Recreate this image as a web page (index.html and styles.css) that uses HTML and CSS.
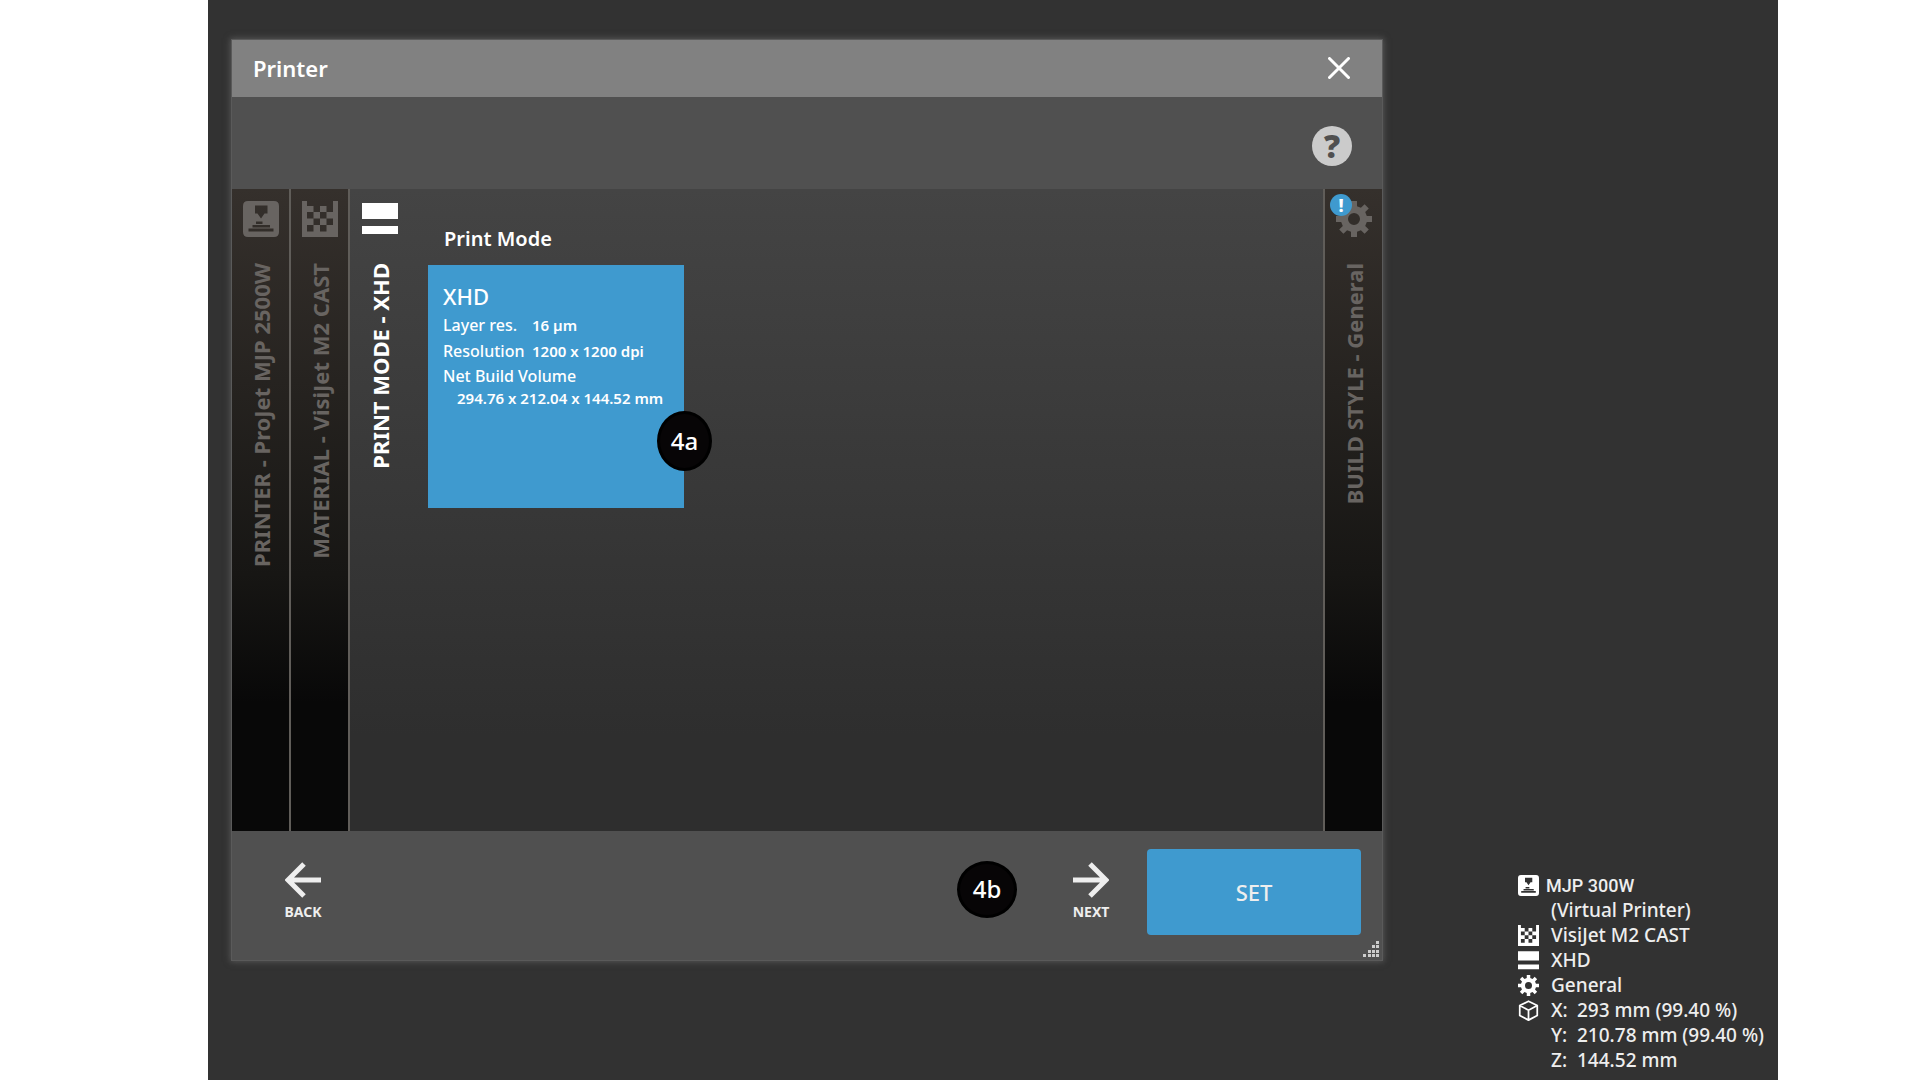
FILE: index.html
```html
<!DOCTYPE html>
<html lang="en">
<head>
<meta charset="utf-8">
<title>Printer</title>
<link rel="stylesheet" href="styles.css">
</head>
<body>
<svg class="sprite" aria-hidden="true">
  <symbol id="i-printer" viewBox="0 0 36 36">
    <path fill-rule="evenodd" d="M5 0H31Q36 0 36 5V31Q36 36 31 36H5Q0 36 0 31V5Q0 0 5 0ZM12 4.500V12.500H14.500L18 17.500L21.500 12.500H24.500V4.500ZM13 20.500V23H19.500V20.500ZM9.500 24V26.500H27V24ZM5.500 27.500V30.500H30.500V27.500Z"/>
  </symbol>
  <symbol id="i-material" viewBox="0 0 36 36">
    <path fill-rule="evenodd" d="M0 0H5V5H11.500V11H18V5H24.500V11H31V0H36V36H0ZM5 11V17.500H11.500V11ZM18 11V17.500H24.500V11ZM11.500 17.500V24H18V17.500ZM24.500 17.500V24H31V17.500ZM5 24V30.500H11.500V24ZM18 24V30.500H24.500V24Z"/>
  </symbol>
  <symbol id="i-mode" viewBox="0 0 36 36">
    <path d="M0 2H36V18H0ZM0 25H36V33H0Z"/>
  </symbol>
  <symbol id="i-gear" viewBox="0 0 36 36">
    <path fill-rule="evenodd" d="M15 0H21V5.200L24.900 6.800L28.600 3.200L32.800 7.400L29.200 11.100L30.800 15H36V21H30.800L29.200 24.900L32.800 28.600L28.600 32.800L24.900 29.200L21 30.800V36H15V30.800L11.100 29.200L7.400 32.800L3.200 28.600L6.800 24.900L5.200 21H0V15H5.200L6.800 11.100L3.200 7.400L7.400 3.200L11.100 6.800L15 5.200ZM18 12A6 6 0 1 0 18 24A6 6 0 1 0 18 12Z"/>
  </symbol>
  <symbol id="i-box" viewBox="0 0 36 36">
    <path fill="none" stroke="currentColor" stroke-width="3" stroke-linejoin="round" d="M18 2L33 9.500V26.500L18 34.500L3 26.500V9.500ZM3 9.500L18 17.500L33 9.500M18 17.500V34.500"/>
  </symbol>
</svg>
<main class="stage">
  <section class="dialog" role="dialog" aria-labelledby="dialog-title">
    <header class="titlebar">
      <h1 id="dialog-title">Printer</h1>
      <button class="close" aria-label="Close">
        <svg viewBox="0 0 22 22"><path d="M1.500 1.500L20.500 20.500M20.500 1.500L1.500 20.500"/></svg>
      </button>
    </header>
    <div class="toolbar">
      <button class="help" aria-label="Help">?</button>
    </div>
    <div class="panels">
      <button class="tab">
        <svg class="tab-icon"><use href="#i-printer"/></svg>
        <span class="tab-label">PRINTER - ProJet MJP 2500W</span>
      </button>
      <button class="tab">
        <svg class="tab-icon"><use href="#i-material"/></svg>
        <span class="tab-label">MATERIAL - VisiJet M2 CAST</span>
      </button>
      <div class="panel">
        <button class="tab active" aria-current="step">
          <svg class="tab-icon"><use href="#i-mode"/></svg>
          <span class="tab-label">PRINT MODE - XHD</span>
        </button>
        <div class="content">
          <h2>Print Mode</h2>
          <div class="card-wrap">
            <button class="card" aria-pressed="true">
              <span class="card-title">XHD</span>
              <span class="card-row"><span class="card-key">Layer res.</span><span class="card-value">16 µm</span></span>
              <span class="card-row"><span class="card-key">Resolution</span><span class="card-value">1200 x 1200 dpi</span></span>
              <span class="card-row volume">Net Build Volume</span>
              <span class="card-value volume-size">294.76 x 212.04 x 144.52 mm</span>
            </button>
            <span class="callout on-card">4a</span>
          </div>
        </div>
      </div>
      <button class="tab last">
        <svg class="tab-icon"><use href="#i-gear"/></svg>
        <span class="alert">!</span>
        <span class="tab-label">BUILD STYLE - General</span>
      </button>
    </div>
    <footer class="footer">
      <button class="nav">
        <svg viewBox="0 0 36 36"><path d="M36 18H4M19 2L3 18L19 34"/></svg>
        BACK
      </button>
      <span class="callout in-footer">4b</span>
      <button class="nav">
        <svg viewBox="0 0 36 36"><path d="M0 18H32M17 2L33 18L17 34"/></svg>
        NEXT
      </button>
      <button class="set">SET</button>
      <svg class="grip" viewBox="0 0 17 17"><path d="M13 0h3v3h-3zM9 4h3v3h-3zM13 4h3v3h-3zM5 9h3v3h-3zM9 9h3v3h-3zM13 9h3v3h-3zM0 13h3v3h-3zM5 13h3v3h-3zM9 13h3v3h-3zM13 13h3v3h-3z"/></svg>
    </footer>
  </section>
  <aside class="status">
    <div class="line printer"><svg><use href="#i-printer"/></svg><span class="printer-name">MJP 300W</span></div>
    <div class="line"><span></span><span>(Virtual Printer)</span></div>
    <div class="line"><svg><use href="#i-material"/></svg><span>VisiJet M2 CAST</span></div>
    <div class="line"><svg><use href="#i-mode"/></svg><span>XHD</span></div>
    <div class="line"><svg><use href="#i-gear"/></svg><span>General</span></div>
    <div class="line"><svg><use href="#i-box"/></svg><span class="axis">X:</span><span>293 mm (99.40 %)</span></div>
    <div class="line"><span></span><span class="axis">Y:</span><span>210.78 mm (99.40 %)</span></div>
    <div class="line"><span></span><span class="axis">Z:</span><span>144.52 mm</span></div>
  </aside>
</main>
</body>
</html>
```
FILE: styles.css
```css
* { box-sizing: border-box; }

body {
  margin: 0;
  padding: 0 142px 0 208px;
  background: #fff;
  color: #fff;
  font-family: "Noto Sans", "Open Sans", sans-serif;
  font-weight: 500;
}

h1, h2 { margin: 0; font-size: 20px; line-height: 28px; }

button {
  margin: 0;
  padding: 0;
  border: 0;
  background: none;
  color: inherit;
  font: inherit;
  cursor: pointer;
}

svg { display: block; fill: currentColor; }

.sprite { position: absolute; width: 0; height: 0; }

.stage {
  display: grid;
  grid-template-columns: minmax(0, 1fr) 396px;
  min-height: 100vh;
  padding: 40px 0 7px 24px;
  background: #323232;
}

/* Dialog */
.dialog {
  align-self: start;
  background: #505050;
  box-shadow: 0 0 0 1px #5a5a5a, 0 0 6px 2px #555;
}

.titlebar {
  display: flex;
  align-items: center;
  justify-content: space-between;
  height: 57px;
  padding: 0 32px 2px 21px;
  background: #818181;
}

.titlebar h1 { font-size: 22px; font-weight: 600; }

.close svg {
  width: 22px;
  height: 22px;
  stroke: #fff;
  stroke-width: 3;
  stroke-linecap: round;
}

.toolbar {
  display: flex;
  align-items: center;
  justify-content: flex-end;
  height: 92px;
  padding: 6px 30px 0 0;
}

.help {
  width: 40px;
  height: 40px;
  border-radius: 50%;
  background: #cbcbcb;
  color: #505050;
  font-family: "Open Sans", sans-serif;
  font-size: 32px;
  font-weight: 800;
  line-height: 40px;
}

.panels { display: flex; min-height: 642px; }

.tab {
  position: relative;
  display: flex;
  flex: 0 0 59px;
  flex-direction: column;
  align-items: center;
  gap: 26px;
  padding-top: 12px;
  border-right: 2px solid #605d59;
  background: linear-gradient(#35302c, #171614 60%, #080808 80%);
  color: #686461;
}

.tab-icon { width: 36px; height: 36px; }

.tab-label {
  font-size: 22px;
  font-weight: 700;
  line-height: 30px;
  white-space: nowrap;
  writing-mode: vertical-rl;
  transform: rotate(180deg);
}

.tab.active { flex-basis: 60px; border: 0; background: none; color: #fff; }

.tab.last { border-right: 0; border-left: 2px solid #605d59; }

.alert {
  position: absolute;
  top: 5px;
  left: 5px;
  width: 22px;
  height: 22px;
  border-radius: 50%;
  background: #3f9acf;
  color: #fff;
  font-size: 18px;
  font-weight: 800;
  line-height: 22px;
}

.panel {
  display: flex;
  flex: 1;
  background: linear-gradient(#444, #2e2e2e 85%);
}

.content { flex: 1; padding: 36px 18px; }

.content h2 { padding-left: 16px; font-weight: 600; }

.card-wrap { position: relative; width: 256px; margin-top: 12px; }

.card {
  display: flex;
  flex-direction: column;
  width: 100%;
  min-height: 243px;
  padding: 15px 0 16px 15px;
  background: #3f9acf;
  font-size: 16px;
  line-height: 22px;
  text-align: left;
  white-space: nowrap;
}

.card-title { font-size: 22px; line-height: 32px; }

.card-row { display: flex; line-height: 26px; }

.card-key { flex: 0 0 89px; }

.card-value { font-size: 15px; font-weight: 600; }

.card-row.volume { line-height: 24px; }

.volume-size { padding-left: 14px; line-height: 20px; }

.callout {
  display: grid;
  place-items: center;
  border: 3px solid #000;
  border-radius: 50%;
  background: #070506;
  font-size: 24px;
  line-height: 32px;
}

.callout.on-card {
  position: absolute;
  right: -28px;
  bottom: 37px;
  width: 55px;
  height: 60px;
}

.callout.in-footer { width: 60px; height: 57px; margin: 0 51px 6px auto; }

.footer {
  position: relative;
  display: flex;
  align-items: center;
  min-height: 129px;
  padding: 0 21px 7px 48px;
}

.nav {
  display: flex;
  flex-direction: column;
  align-items: center;
  gap: 4px;
  width: 46px;
  color: #eee;
  font-size: 14px;
  font-weight: 700;
  line-height: 20px;
}

.nav svg {
  width: 36px;
  height: 36px;
  fill: none;
  stroke: currentColor;
  stroke-width: 5;
}

.set {
  width: 214px;
  height: 86px;
  margin-left: 33px;
  border-radius: 4px;
  background: #3f9acf;
  color: #eee;
  font-size: 22px;
}

.grip { position: absolute; right: 2px; bottom: 2px; width: 17px; height: 17px; color: #ccc; }

/* Current setup */
.status {
  align-self: end;
  padding-left: 136px;
  color: #eee;
  font-size: 19px;
  line-height: 25px;
  white-space: nowrap;
}

.line {
  display: grid;
  grid-template-columns: 33px 26px auto;
  align-items: center;
  height: 25px;
}

.line > :nth-child(2):last-child { grid-column: 2 / -1; }

.line.printer { grid-template-columns: 28px 26px auto; }

.printer-name { font-family: Roboto, sans-serif; font-size: 18px; }

.line svg { width: 21px; height: 21px; color: #fff; }
```
